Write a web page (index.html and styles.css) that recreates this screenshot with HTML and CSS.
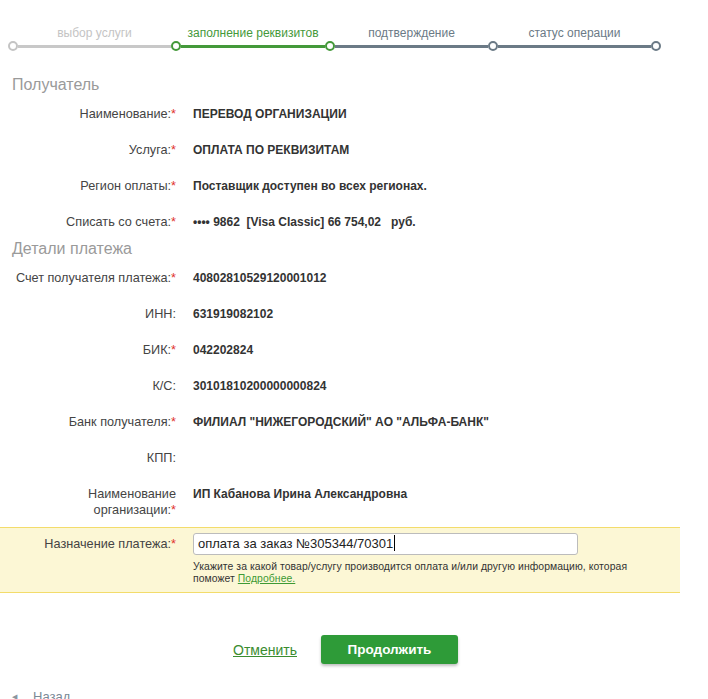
FILE: index.html
```html
<!DOCTYPE html>
<html lang="ru">
    <head>
        <meta charset="UTF-8">
        <title>Оплата по реквизитам</title>
        <link rel="stylesheet" href="styles.css">
    </head>
    <body>
        <div class="page">
            <div class="steps">
                <div class="step-labels">
                    <div class="step-label done">выбор услуги</div>
                    <div class="step-label current">заполнение реквизитов</div>
                    <div class="step-label">подтверждение</div>
                    <div class="step-label">статус операции</div>
                </div>
                <div class="step-track">
                    <span class="dot done"></span>
                    <span class="line done w1"></span>
                    <span class="dot current"></span>
                    <span class="line current w2"></span>
                    <span class="dot current"></span>
                    <span class="line w1"></span>
                    <span class="dot"></span>
                    <span class="line w1"></span>
                    <span class="dot"></span>
                </div>
            </div>

            <h3 class="section-title">Получатель</h3>
            <div class="row">
                <div class="label">Наименование:<span class="req">*</span></div>
                <div class="value">ПЕРЕВОД ОРГАНИЗАЦИИ</div>
            </div>
            <div class="row">
                <div class="label">Услуга:<span class="req">*</span></div>
                <div class="value">ОПЛАТА ПО РЕКВИЗИТАМ</div>
            </div>
            <div class="row">
                <div class="label">Регион оплаты:<span class="req">*</span></div>
                <div class="value">Поставщик доступен во всех регионах.</div>
            </div>
            <div class="row">
                <div class="label">Списать со счета:<span class="req">*</span></div>
                <div class="value">•••• 9862&nbsp; [Visa Classic] 66 754,02 &nbsp; руб.</div>
            </div>

            <h3 class="section-title">Детали платежа</h3>
            <div class="row">
                <div class="label">Счет получателя платежа:<span class="req">*</span></div>
                <div class="value">40802810529120001012</div>
            </div>
            <div class="row">
                <div class="label">ИНН:</div>
                <div class="value">631919082102</div>
            </div>
            <div class="row">
                <div class="label">БИК:<span class="req">*</span></div>
                <div class="value">042202824</div>
            </div>
            <div class="row">
                <div class="label">К/С:</div>
                <div class="value">30101810200000000824</div>
            </div>
            <div class="row">
                <div class="label">Банк получателя:<span class="req">*</span></div>
                <div class="value">ФИЛИАЛ "НИЖЕГОРОДСКИЙ" АО "АЛЬФА-БАНК"</div>
            </div>
            <div class="row">
                <div class="label">КПП:</div>
                <div class="value"></div>
            </div>
            <div class="row">
                <div class="label">Наименование<br>организации:<span class="req">*</span></div>
                <div class="value">ИП Кабанова Ирина Александровна</div>
            </div>

            <div class="row row-active">
                <div class="label">Назначение платежа:<span class="req">*</span></div>
                <div class="field">
                    <div class="input">оплата за заказ №305344/70301<span class="caret"></span></div>
                    <div class="hint">Укажите за какой товар/услугу производится оплата и/или другую информацию, которая поможет <a href="#">Подробнее.</a></div>
                </div>
            </div>

            <div class="actions">
                <a href="#" class="cancel">Отменить</a>
                <button class="submit">Продолжить</button>
            </div>

            <div class="back">
                <span class="back-arrow">&#9664;</span>
                <a href="#">Назад</a>
            </div>
        </div>
    </body>
</html>
```

FILE: styles.css
```css
body {
    margin: 0;
    padding: 0;
    background-color: #fff;
    font-family: "Liberation Sans", Arial, sans-serif;
    color: #333;
}

.page {
    width: 680px;
}

/* шаги */
.steps {
    padding-top: 25px;
}

.step-labels {
    display: grid;
    grid-template-columns: 163px 154px 163px 163px;
    padding-left: 13px;
}

.step-label {
    text-align: center;
    font-size: 12px;
    line-height: 16px;
    color: #6b7a86;
}

.step-label.done {
    color: #c4c4c4;
}

.step-label.current {
    color: #44993a;
}

.step-track {
    display: flex;
    align-items: center;
    height: 10px;
    padding-left: 8px;
}

.dot {
    width: 6px;
    height: 6px;
    border: 2px solid #6b7a86;
    border-radius: 50%;
    background-color: #fff;
    flex: none;
}

.dot.done {
    border-color: #c4c4c4;
}

.dot.current {
    border-color: #44993a;
}

.line {
    height: 3px;
    background-color: #6b7a86;
    flex: none;
}

.line.w1 { width: 153px; }
.line.w2 { width: 144px; }

.line.done {
    background-color: #c8c8c8;
}

.line.current {
    background-color: #44993a;
}

/* форма */
.section-title {
    margin: 25px 0 2px 12px;
    font-size: 16px;
    line-height: 18px;
    font-weight: normal;
    color: #9a9a9a;
}

.row + .section-title {
    margin-top: 0;
}

.row {
    display: flex;
    padding: 10px 0;
    line-height: 16px;
}

.label {
    width: 176px;
    flex: none;
    text-align: right;
    font-size: 12.7px;
    color: #444;
}

.req {
    color: #e0302c;
}

.value {
    margin-left: 17px;
    font-size: 12px;
    font-weight: bold;
    color: #333;
}

.row-active {
    margin-top: -1px;
    padding: 5px 0 7px;
    background-color: #fcf7d5;
    border-top: 1px solid #f3dc6b;
    border-bottom: 1px solid #f3dc6b;
}

.row-active .label {
    padding-top: 3px;
}

.field {
    margin-left: 17px;
}

.input {
    width: 375px;
    height: 20px;
    padding: 0 4px;
    border: 1px solid #bcbcbc;
    border-radius: 3px;
    background-color: #fff;
    font-size: 13px;
    line-height: 20px;
    color: #222;
}

.caret {
    display: inline-block;
    width: 1px;
    height: 16px;
    margin-left: 1px;
    background-color: #000;
    vertical-align: -3px;
}

.hint {
    margin-top: 6px;
    width: 450px;
    font-size: 10.4px;
    letter-spacing: 0.07px;
    line-height: 12px;
    color: #333;
}

.hint a {
    color: #3d9a34;
}

/* кнопки */
.actions {
    display: flex;
    align-items: center;
    gap: 24px;
    padding-left: 233px;
    margin-top: 42px;
}

.cancel {
    font-size: 14px;
    color: #3b8d30;
}

.submit {
    width: 137px;
    height: 29px;
    border: none;
    border-radius: 3px;
    background-color: #2e9b38;
    color: #fff;
    font-family: "Liberation Sans", Arial, sans-serif;
    font-size: 13.5px;
    font-weight: bold;
    box-shadow: 0 2px 3px rgba(0, 0, 0, 0.25);
    cursor: pointer;
}

.back {
    display: flex;
    align-items: center;
    margin-top: 25px;
    padding-left: 12px;
    font-size: 13px;
}

.back-arrow {
    font-size: 7px;
    color: #8a96a0;
    width: 21px;
}

.back a {
    color: #7a8a96;
    text-decoration: none;
}
```
